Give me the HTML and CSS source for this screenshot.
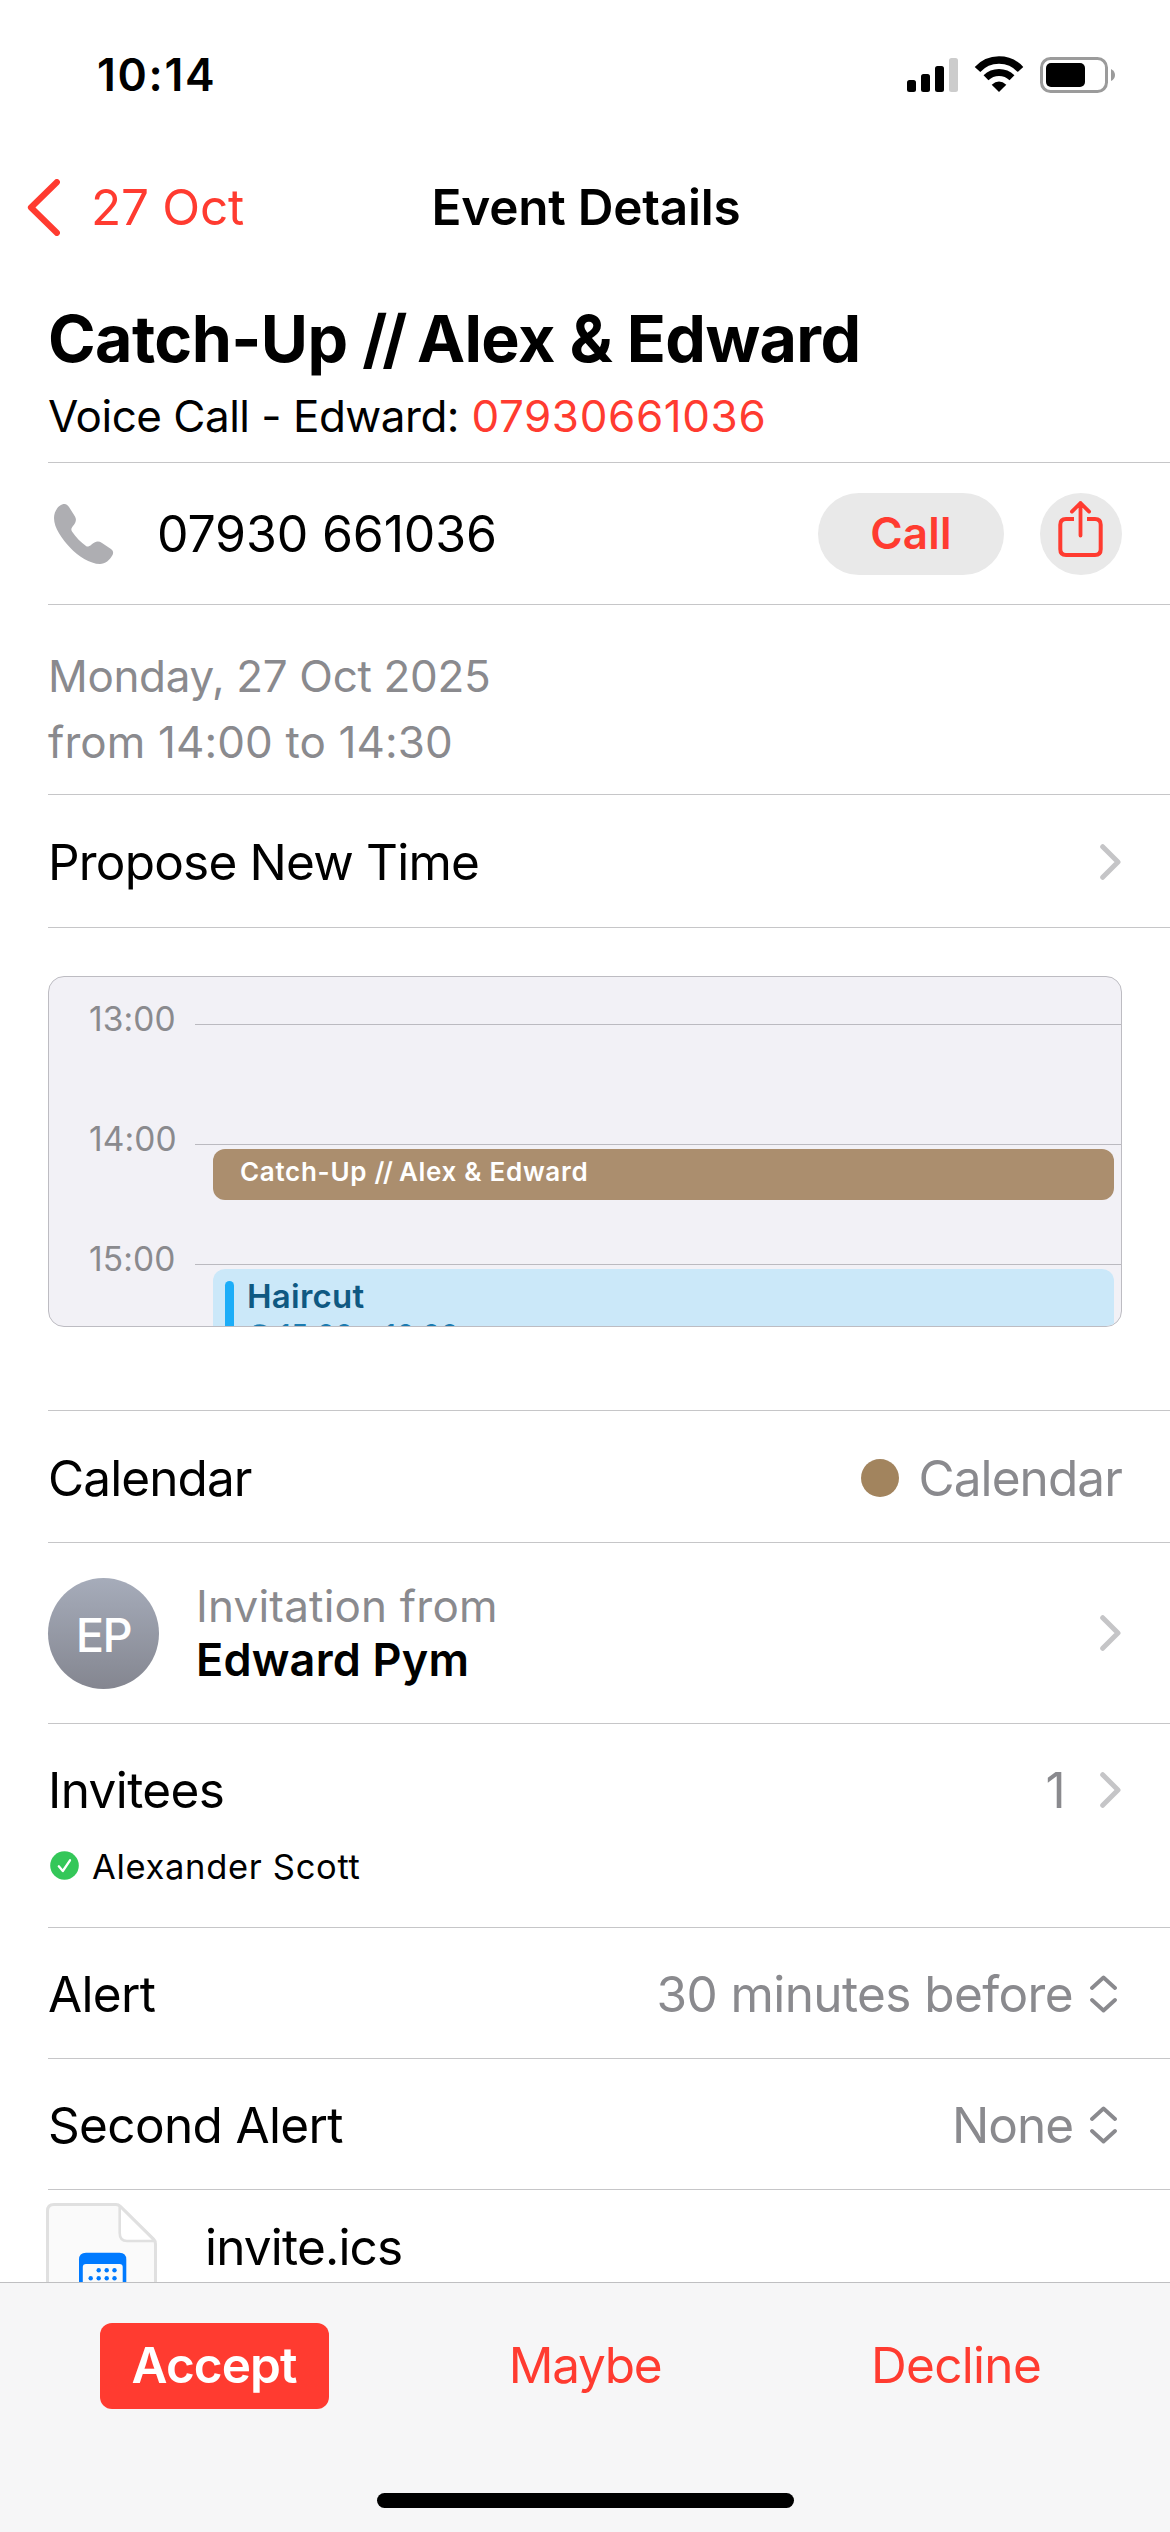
FILE: index.html
```html
<!DOCTYPE html>
<html lang="en">
<head>
<meta charset="utf-8">
<meta name="viewport" content="width=device-width">
<title>Event Details</title>
<link rel="stylesheet" href="styles.css">
</head>
<body>
<svg class="defs" width="0" height="0" aria-hidden="true">
  <symbol id="chevron" viewBox="0 0 21 36"><path d="M2.7 2.7 18 18 2.7 33.3" fill="none" stroke="#c5c5c7" stroke-width="5" stroke-linecap="round" stroke-linejoin="round"/></symbol>
  <symbol id="updown" viewBox="0 0 27 38"><path d="M2 13 13.5 2.5 25 13M2 25 13.5 35.5 25 25" fill="none" stroke="#8a8a8e" stroke-width="3.8" stroke-linecap="round" stroke-linejoin="round"/></symbol>
</svg>
<div class="screen">
  <header class="status">
    <span class="clock">10:14</span>
    <svg class="status-icons" width="208" height="37" viewBox="0 0 208 37">
      <rect x="0" y="24" width="9" height="12" rx="2.5"/>
      <rect x="14" y="18" width="9" height="18" rx="2.5"/>
      <rect x="28" y="10" width="9" height="26" rx="2.5"/>
      <rect x="42" y="2" width="9" height="34" rx="2.5" fill="#ccc"/>
      <path d="M70.5 13.5A29 29 0 0 1 113.5 13.5" fill="none" stroke="#000" stroke-width="7.5"/>
      <path d="M79 21.8A18.6 18.6 0 0 1 105 21.8" fill="none" stroke="#000" stroke-width="7"/>
      <path d="M84.7 28.8Q92 22 99.3 28.8L92 36Z"/>
      <rect x="134.5" y="2.5" width="65" height="33" rx="9" fill="none" stroke="#9b9b9b" stroke-width="3"/>
      <rect x="139" y="7" width="39" height="24" rx="5"/>
      <path d="M204 13Q208 15 208 19T204 25Z" fill="#9b9b9b"/>
    </svg>
  </header>

  <nav class="nav">
    <a class="back">
      <svg width="33" height="57" viewBox="0 0 33 57"><path d="M29.8 3.2 4 28.5 29.8 53.8" fill="none" stroke="#ff3b30" stroke-width="6.2" stroke-linecap="round" stroke-linejoin="round"/></svg>
      <span>27 Oct</span>
    </a>
    <span class="nav-title">Event Details</span>
  </nav>

  <main class="content">
    <section class="row head">
      <h1>Catch-Up <span class="slashes">//</span> Alex &amp; Edward</h1>
      <p><span class="location">Voice Call - Edward:</span> <a class="phone-link">07930661036</a></p>
    </section>

    <section class="row call">
      <svg class="phone" width="60" height="60" viewBox="0 0 60 60"><path fill="#aeaeb2" d="M0 14C0 7 5 0 10.5 0 12.5 0 14 1.5 15 3L21 12.5C23 16 21.5 19 19 22 17 24.500 17 26 18 27.500 22 33.500 27 38.500 32 42 33.500 43 35 42.500 37 41 41 37.500 44 36.500 48 39L57 45C59.500 47 59.500 49 58.500 51 56 56 51 60 46 60 36 60 24 52 16 43.500 8 35 0 24 0 14Z"/></svg>
      <span class="number">07930 661036</span>
      <button class="call-btn">Call</button>
      <button class="share-btn" aria-label="Share">
        <svg width="82" height="82" viewBox="0 0 82 82"><path d="M34 26H26Q20.300 26 20.300 31.700V56.300Q20.300 62 26 62H55Q60.700 62 60.700 56.300V31.700Q60.700 26 55 26H47" fill="none" stroke="#ff3b30" stroke-width="4"/><path d="M40.500 10V42.500M31.900 18.600 40.500 10 49.100 18.600" fill="none" stroke="#ff3b30" stroke-width="3.800" stroke-linecap="round" stroke-linejoin="round"/></svg>
      </button>
    </section>

    <section class="row date">
      <p class="date-day">Monday, 27 Oct 2025</p>
      <p class="date-time">from 14:00 to 14:30</p>
    </section>

    <section class="row propose">
      <span class="label">Propose New Time</span>
      <svg class="end" width="21" height="36"><use href="#chevron"/></svg>
    </section>

    <section class="row preview">
      <div class="timeline">
        <div class="hour"><span>13:00</span></div>
        <div class="hour"><span>14:00</span></div>
        <div class="hour"><span>15:00</span></div>
        <div class="event event-meeting">Catch-Up <span class="slashes-small">//</span> Alex &amp; Edward</div>
        <div class="event event-haircut">
          <i class="event-bar"></i>
          <div>
            <div class="event-name">Haircut</div>
            <div class="event-time"><svg width="26" height="26" viewBox="0 0 26 26"><circle cx="13" cy="13" r="11.500" fill="none" stroke="#1b7bb0" stroke-width="2.500"/><path d="M13 6V13H8" fill="none" stroke="#1b7bb0" stroke-width="2.500"/></svg>15:00 – 16:00</div>
          </div>
        </div>
      </div>
    </section>

    <section class="row calendar">
      <span class="label cal-name">Calendar</span>
      <i class="dot"></i>
      <span class="value cal-name">Calendar</span>
    </section>

    <section class="row organiser">
      <span class="avatar">EP</span>
      <div class="who">
        <p class="who-label">Invitation from</p>
        <p class="who-name">Edward Pym</p>
      </div>
      <svg class="end" width="21" height="36"><use href="#chevron"/></svg>
    </section>

    <section class="row invitees">
      <div class="line">
        <span class="label inv-label">Invitees</span>
        <span class="value count">1</span>
        <svg class="end" width="21" height="36"><use href="#chevron"/></svg>
      </div>
      <div class="invitee">
        <svg width="29" height="29" viewBox="0 0 29 29"><circle cx="14.500" cy="14.500" r="14.300" fill="#34c759"/><path d="M8.800 15.300 12.800 20 20 9.300" fill="none" stroke="#fff" stroke-width="2.300" stroke-linecap="round" stroke-linejoin="round"/></svg>
        <span>Alexander Scott</span>
      </div>
    </section>

    <section class="row alert">
      <span class="label alert-name">Alert</span>
      <span class="value">30 minutes before</span>
      <svg class="updown" width="27" height="38"><use href="#updown"/></svg>
    </section>

    <section class="row alert">
      <span class="label alert-name">Second Alert</span>
      <span class="value tight">None</span>
      <svg class="updown" width="27" height="38"><use href="#updown"/></svg>
    </section>

    <section class="file">
      <svg width="111" height="140" viewBox="0 0 111 140">
        <path d="M1.500 140V8Q1.500 1.500 8 1.500H70Q72.500 1.500 74.500 3.500L107.500 36Q109.500 38 109.500 41V140Z" fill="#fafafa" stroke="#e0e0e0" stroke-width="3"/>
        <path d="M73.700 3V30Q73.700 38 81 38H109Z" fill="#fff" stroke="#e0e0e0" stroke-width="2.600" stroke-linejoin="round"/>
        <path d="M33 90V56.500Q33 49.700 40 49.700H73.500Q80.300 49.700 80.300 56.500V90Z" fill="#007aff"/>
        <path d="M36.800 90V64Q36.800 61 40 61H73.500Q76.700 61 76.700 64V90Z" fill="#fafafa"/>
        <g fill="#007aff"><circle cx="52.700" cy="67.300" r="2.200"/><circle cx="60.700" cy="67.300" r="2.200"/><circle cx="68.500" cy="67.300" r="2.200"/><circle cx="44.700" cy="75.200" r="2.200"/><circle cx="52.700" cy="75.200" r="2.200"/><circle cx="60.700" cy="75.200" r="2.200"/><circle cx="68.500" cy="75.200" r="2.200"/></g>
      </svg>
      <span>invite.ics</span>
    </section>
  </main>

  <footer class="toolbar">
    <div class="actions">
      <button class="action accept">Accept</button>
      <button class="action maybe">Maybe</button>
      <button class="action decline">Decline</button>
    </div>
    <div class="home"></div>
  </footer>
</div>
</body>
</html>
```
FILE: styles.css
```css
* { box-sizing: border-box; margin: 0; padding: 0; }

body {
  width: 1170px;
  background: #fff;
  color: #000;
  font-family: Inter, "Liberation Sans", sans-serif;
  font-size: 49.5px;
}

svg { display: block; flex: none; }
.defs { position: absolute; }
button { border: 0; font: inherit; color: #ff3b30; background: none; }
span, p, h1 { white-space: nowrap; }

.screen {
  width: 1170px;
  height: 2532px;
  display: flex;
  flex-direction: column;
  overflow: hidden;
}

/* Status bar and navigation */
.status {
  height: 149px;
  padding: 0 55px 0 97px;
  display: flex;
  align-items: center;
  justify-content: space-between;
}
.clock { font-size: 44.5px; font-weight: 600; letter-spacing: 1.7px; }

.nav {
  height: 116px;
  padding: 0 27px;
  display: grid;
  grid-template-columns: 1fr auto 1fr;
  align-items: center;
}
.back { display: flex; align-items: center; gap: 31px; color: #ff3b30; letter-spacing: -.26px; }
.nav-title { padding-left: 2px; font-weight: 600; letter-spacing: -.22px; }

/* Rows */
.content { flex: 1; display: flex; flex-direction: column; overflow: hidden; }
.row {
  flex: none;
  margin-left: 48px;
  padding-right: 48px;
  border-bottom: 1px solid #c6c6c8;
  display: flex;
  align-items: center;
}
.label { letter-spacing: -.8px; }
.value { margin-left: auto; color: #8a8a8e; letter-spacing: -.6px; }
.tight { letter-spacing: -1px; }
.end { margin-left: auto; margin-right: 1px; }

.head { height: 198px; padding-top: 34px; flex-direction: column; align-items: flex-start; }
h1 { font-size: 64.5px; font-weight: 700; line-height: 80px; letter-spacing: -.6px; }
.slashes { letter-spacing: -5px; }
.head p { margin-top: 7px; font-size: 44px; line-height: 60px; }
.location { letter-spacing: -.5px; }
.phone-link { color: #ff3b30; letter-spacing: .6px; }

.call { height: 142px; }
.phone { margin-left: 6px; }
.number { margin-left: 43px; font-size: 50px; letter-spacing: -.15px; }
.call-btn {
  width: 186px;
  height: 82px;
  margin-left: auto;
  padding-bottom: 2px;
  border-radius: 41px;
  background: #e9e9e9;
  font-size: 44px;
  font-weight: 600;
  letter-spacing: .25px;
}
.share-btn { width: 82px; height: 82px; margin-left: 36px; border-radius: 50%; background: #e9e9e9; }

.date {
  height: 190px;
  padding-top: 38px;
  flex-direction: column;
  align-items: flex-start;
  justify-content: flex-start;
  color: #8a8a8e;
  font-size: 44px;
  line-height: 66px;
}
.date-day { letter-spacing: -.34px; }
.date-time { letter-spacing: .1px; }

.propose { height: 133px; padding-top: 1px; }

/* Day preview */
.preview { height: 483px; padding-top: 48px; align-items: flex-start; }
.timeline {
  position: relative;
  width: 1074px;
  height: 351px;
  border: 1px solid #bdbcc2;
  border-radius: 16px;
  background: #f2f1f6;
  overflow: hidden;
}
.hour { height: 120px; padding-left: 40px; display: flex; gap: 20px; }
.hour::after { content: ""; flex: 1; margin-top: 47px; height: 1px; background: #bbbac0; }
.hour span { width: 86px; margin-top: 22px; color: #8a8a8e; font-size: 33.5px; line-height: 40px; letter-spacing: .1px; }
.event { position: absolute; left: 164px; width: 901px; border-radius: 12px; }
.event-meeting {
  top: 172px;
  height: 51px;
  padding: 3px 27px;
  background: #ab8e6e;
  color: #fff;
  font-size: 26px;
  font-weight: 600;
  line-height: 40px;
  letter-spacing: .7px;
}
.slashes-small { letter-spacing: -1.2px; }
.event-haircut {
  top: 292px;
  height: 120px;
  padding: 10px 12px;
  display: flex;
  gap: 13px;
  background: #cbe8f9;
}
.event-bar { width: 9px; margin-top: 2px; border-radius: 5px; background: #1badf8; }
.event-name { color: #0f5982; font-size: 33px; font-weight: 600; line-height: 34px; letter-spacing: .25px; }
.event-time {
  margin-top: 11px;
  display: flex;
  align-items: flex-start;
  gap: 6px;
  color: #1b7bb0;
  font-size: 29px;
  line-height: 22px;
}

/* Calendar */
.calendar { height: 132px; padding-top: 2px; }
.cal-name { letter-spacing: -.9px; }
.dot { width: 38px; height: 38px; margin-left: auto; border-radius: 50%; background: #a2845e; }
.calendar .value { margin-left: 19px; }

/* Organiser */
.organiser { height: 181px; }
.avatar {
  width: 111px;
  height: 111px;
  border-radius: 50%;
  background: linear-gradient(#a6acba, #848690);
  color: #fff;
  font-size: 47px;
  font-weight: 500;
  line-height: 113px;
  letter-spacing: -1.5px;
  text-align: center;
}
.who { margin-left: 37px; font-size: 44px; line-height: 54px; }
.who-label { color: #8a8a8e; letter-spacing: .2px; }
.who-name { font-size: 45px; font-weight: 600; letter-spacing: .2px; }

/* Invitees */
.invitees { height: 204px; padding-top: 36px; flex-direction: column; align-items: stretch; }
.line { height: 60px; display: flex; align-items: center; }
.inv-label { letter-spacing: -.6px; }
.count + .end { margin-left: 35px; }
.invitee {
  margin: 21px 0 0 2px;
  height: 50px;
  display: flex;
  align-items: center;
  gap: 13px;
  font-size: 34.5px;
  letter-spacing: .68px;
}
.invitee svg { margin-top: -2px; }

/* Alerts */
.alert { height: 131px; padding-top: 1px; }
.alert-name { letter-spacing: -.65px; }
.updown { margin: 0 5px 0 17px; }

/* Attachment */
.file { height: 92px; flex: none; padding: 13px 46px 0; display: flex; gap: 48px; overflow: hidden; }
.file span { margin-top: 12px; line-height: 64px; letter-spacing: -.82px; }

/* Response toolbar */
.toolbar {
  height: 250px;
  border-top: 1px solid #bfbfc1;
  background: #f6f6f7;
  display: flex;
  flex-direction: column;
  align-items: center;
}
.actions {
  width: 1113px;
  height: 86px;
  margin-top: 40px;
  display: grid;
  grid-template-columns: repeat(3, 1fr);
  justify-items: center;
}
.action { padding-bottom: 2px; }
.accept { width: 229px; border-radius: 12px; background: #ff3b30; color: #fff; font-weight: 600; letter-spacing: -.95px; }
.maybe { letter-spacing: -1.3px; }
.decline { letter-spacing: -.68px; }
.home { width: 417px; height: 15px; margin-top: 84px; border-radius: 8px; background: #000; }
```
